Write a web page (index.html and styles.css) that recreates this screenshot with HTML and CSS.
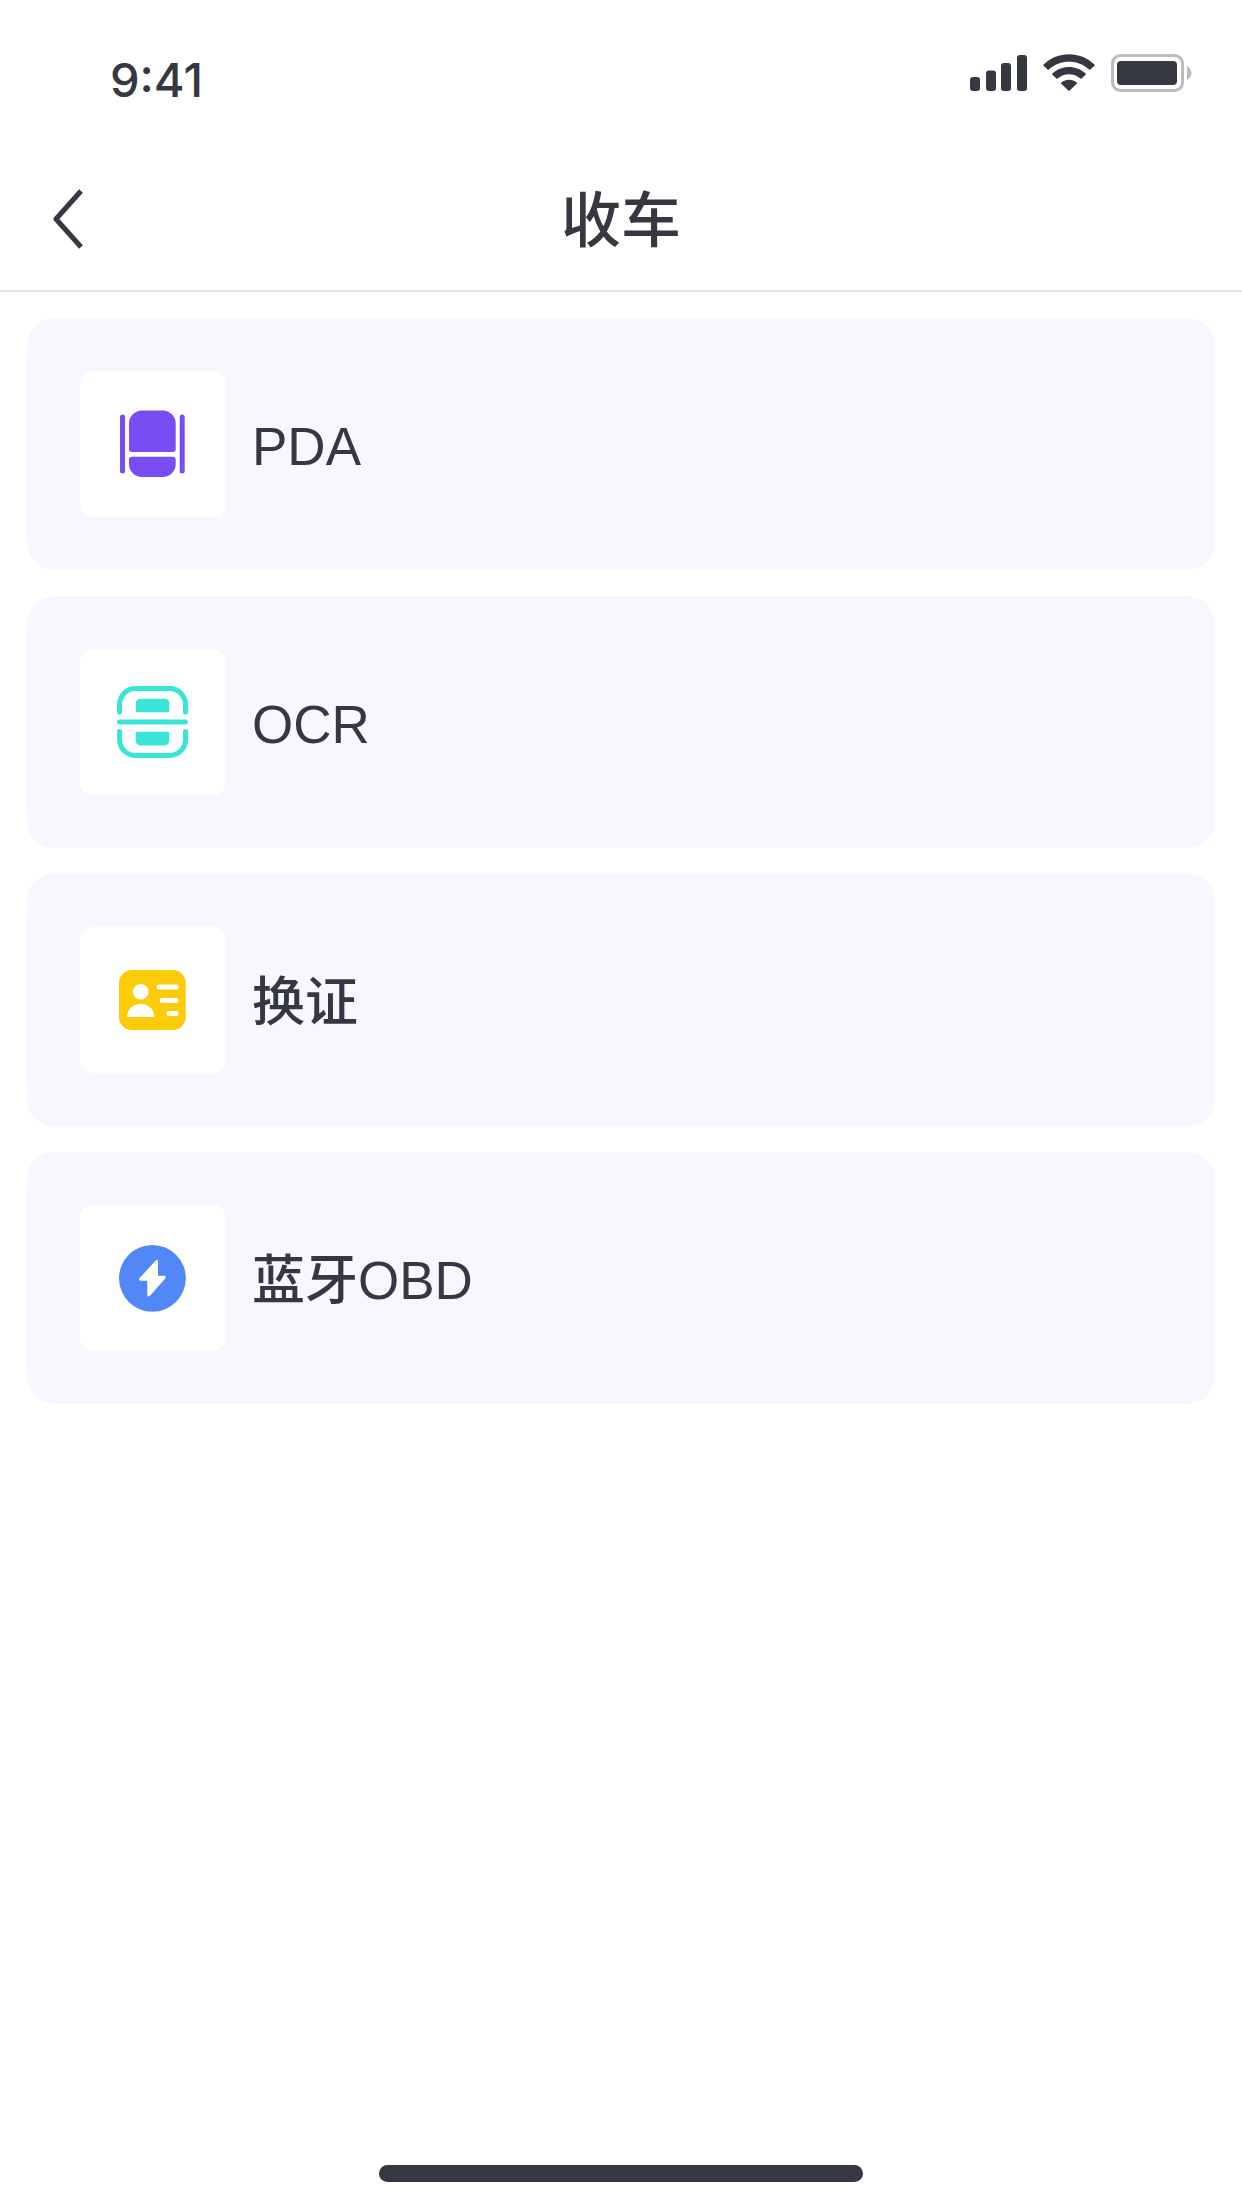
FILE: index.html
```html
<!DOCTYPE html>
<html lang="zh-CN">
<head>
    <meta charset="UTF-8">
    <meta name="viewport" content="width=device-width, initial-scale=1.0">
    <title>收车</title>
    <link rel="stylesheet" href="styles.css">
</head>
<body>
    <div class="status-bar">
        <span class="status-time">9:41</span>
        <div class="status-icons">
            <svg class="icon-signal" viewBox="0 0 57 38" aria-hidden="true">
                <rect x="0" y="23" width="10" height="14" rx="3"/>
                <rect x="16" y="16.5" width="10" height="20.5" rx="3"/>
                <rect x="31" y="9" width="10" height="28" rx="3"/>
                <rect x="47" y="1" width="10" height="36" rx="3"/>
            </svg>
            <svg class="icon-wifi" viewBox="0 0 52 38" aria-hidden="true">
                <path d="M0.6 10.6C14.5-3.2 37.5-3.2 51.4 10.6Q52 11.2 51.4 11.8L47.4 15.6Q46.8 16.2 46.2 15.6C35 5.1 17 5.1 5.8 15.6Q5.2 16.2 4.6 15.6L.6 11.8Q0 11.2.6 10.6Z"/>
                <path d="M9.4 19.6C18.6 10.8 33.4 10.8 42.6 19.6Q43.2 20.2 42.6 20.8L38.6 24.6Q38 25.2 37.4 24.6C31 18.8 21 18.8 14.6 24.6Q14 25.2 13.4 24.6L9.4 20.8Q8.8 20.2 9.4 19.6Z"/>
                <path d="M18.3 28.4C22.8 24.7 29.2 24.7 33.7 28.4Q34.4 29 33.7 29.7L26.7 36.4Q26 37 25.3 36.4L18.3 29.7Q17.6 29 18.3 28.4Z"/>
            </svg>
            <svg class="icon-battery" viewBox="0 0 82 38" aria-hidden="true">
                <rect class="battery-shell" x="1.5" y="1.5" width="70" height="35" rx="8"/>
                <rect x="6" y="7" width="60" height="24" rx="4"/>
                <path class="battery-cap" d="M76 12C78.600 13.500 80.500 16 80.500 19C80.500 22 78.600 24.500 76 26Z"/>
            </svg>
        </div>
    </div>

    <header class="header">
        <button class="back-button" type="button" aria-label="返回">
            <svg viewBox="0 0 30 60" aria-hidden="true">
                <path d="M28 2L3 30L28 58"/>
            </svg>
        </button>
        <h1 class="title">收车</h1>
    </header>

    <main class="menu">
        <a class="menu-item" href="#pda">
            <span class="menu-icon">
                <svg class="pda" viewBox="0 0 72 72" aria-hidden="true">
                    <rect x="3" y="6.500" width="5" height="59" rx="2.500"/>
                    <rect x="62.700" y="6.500" width="5" height="59" rx="2.500"/>
                    <path d="M12 15.500a13 13 0 0 1 13-13h20.700a13 13 0 0 1 13 13v25.500a3 3 0 0 1-3 3h-40.700a3 3 0 0 1-3-3Z"/>
                    <path d="M15 48.700h40.700a3 3 0 0 1 3 3v4.300a13 13 0 0 1-13 13h-20.700a13 13 0 0 1-13-13v-4.300a3 3 0 0 1 3-3Z"/>
                </svg>
            </span>
            <span class="menu-text">PDA</span>
        </a>
        <a class="menu-item" href="#ocr">
            <span class="menu-icon">
                <svg class="ocr" viewBox="0 0 72 72" aria-hidden="true">
                    <path class="frame" d="M2.500 26v-7.500a16 16 0 0 1 16-16h34a16 16 0 0 1 16 16v7.500M2.500 36h66M2.500 45.500v8a16 16 0 0 0 16 16h34a16 16 0 0 0 16-16v-8"/>
                    <path d="M18.700 17.500a4.800 4.800 0 0 1 4.800-4.800h24a4.800 4.800 0 0 1 4.800 4.800v7.300a1.500 1.500 0 0 1-1.500 1.500h-30.600a1.500 1.500 0 0 1-1.500-1.500Z"/>
                    <path d="M20.200 45.800h30.600a1.500 1.500 0 0 1 1.500 1.500v7.300a4.800 4.800 0 0 1-4.800 4.800h-24a4.800 4.800 0 0 1-4.800-4.800v-7.300a1.500 1.500 0 0 1 1.500-1.500Z"/>
                </svg>
            </span>
            <span class="menu-text">OCR</span>
        </a>
        <a class="menu-item" href="#card">
            <span class="menu-icon">
                <svg class="card" viewBox="0 0 72 72" aria-hidden="true">
                    <rect x="2" y="6" width="66.700" height="60" rx="13"/>
                    <g class="cutout">
                        <circle cx="23.700" cy="27.700" r="7.800"/>
                        <path d="M10.200 51.500C10.900 44.800 16.600 39.700 23.700 39.700S36.500 44.800 37.200 51.500Q37.300 53 35.900 53H11.500Q10.100 53 10.200 51.500Z"/>
                        <rect x="39.500" y="20.500" width="22" height="5" rx="2.500"/>
                        <rect x="42.700" y="34" width="18.700" height="5" rx="2.500"/>
                        <rect x="49.500" y="47" width="12" height="5" rx="2.500"/>
                    </g>
                </svg>
            </span>
            <span class="menu-text">换证</span>
        </a>
        <a class="menu-item" href="#obd">
            <span class="menu-icon">
                <svg class="obd" viewBox="0 0 72 72" aria-hidden="true">
                    <circle cx="35.400" cy="36.300" r="33.400"/>
                    <path class="cutout" d="M38.700 18.600Q41 16.700 41 19.200V33.800H47.500Q49.700 34.200 48.400 36.200L33.200 53.600Q30.500 55.800 30.300 53V38.700H23.300Q21.100 38.200 22.400 36.200Z"/>
                </svg>
            </span>
            <span class="menu-text">蓝牙OBD</span>
        </a>
    </main>

    <div class="home-bar"></div>
</body>
</html>
```
FILE: styles.css
```css
* {
    box-sizing: border-box;
}

body {
    font-family: "Liberation Sans", "Noto Sans CJK SC", sans-serif;
    margin: 0;
    min-height: 100vh;
    display: flex;
    flex-direction: column;
    background-color: #fff;
    color: #363841;
}

/* Status bar */
.status-bar {
    display: flex;
    justify-content: space-between;
    align-items: flex-start;
    height: 146px;
    padding: 54px 49px 0 110px;
}

.status-time {
    font-family: Inter, sans-serif;
    font-size: 47px;
    font-weight: 500;
    line-height: 52px;
}

.status-icons {
    display: flex;
    gap: 16px;
    fill: #363841;
}

.status-icons svg {
    height: 38px;
}

.icon-signal {
    width: 57px;
}

.icon-wifi {
    width: 52px;
}

.icon-battery {
    width: 82px;
}

.battery-shell {
    fill: none;
    stroke: #bbbbc0;
    stroke-width: 3;
}

.battery-cap {
    fill: #bbbbc0;
}

/* Header */
.header {
    display: grid;
    grid-template-columns: 1fr auto 1fr;
    align-items: center;
    height: 146px;
    padding: 2px 53px 0;
    border-bottom: 2px solid #e2e2e2;
}

.back-button {
    justify-self: start;
    display: flex;
    padding: 0;
    border: none;
    background: none;
    cursor: pointer;
}

.back-button svg {
    width: 30px;
    height: 60px;
    fill: none;
    stroke: #363841;
    stroke-width: 5;
    stroke-linejoin: round;
}

.title {
    margin: 0;
    padding-top: 6px;
    font-size: 60px;
    font-weight: 500;
    line-height: 80px;
}

/* Menu */
.menu {
    flex: 1;
    display: flex;
    flex-direction: column;
    gap: 26px;
    padding: 26px 27px;
}

.menu-item {
    display: flex;
    align-items: center;
    gap: 26px;
    padding: 53px;
    border-radius: 27px;
    background-color: #f8f6ff;
    color: inherit;
    text-decoration: none;
}

.menu-icon {
    display: flex;
    align-items: center;
    justify-content: center;
    width: 146px;
    height: 146px;
    border-radius: 13px;
    background-color: #fff;
}

.menu-icon svg {
    width: 72px;
    height: 72px;
}

.menu-text {
    padding-top: 5px;
    font-size: 53px;
    font-weight: 500;
    line-height: 72px;
}

.pda {
    fill: #784df3;
}

.ocr {
    fill: #39e4d8;
}

.ocr .frame {
    fill: none;
    stroke: #39e4d8;
    stroke-width: 5;
    stroke-linecap: round;
}

.card {
    fill: #fccb0a;
}

.obd {
    fill: #5187f7;
}

.cutout {
    fill: #fff;
}

/* Home bar */
.home-bar {
    align-self: center;
    width: 484px;
    height: 17px;
    margin-bottom: 26px;
    border-radius: 9px;
    background-color: #363841;
}
```
